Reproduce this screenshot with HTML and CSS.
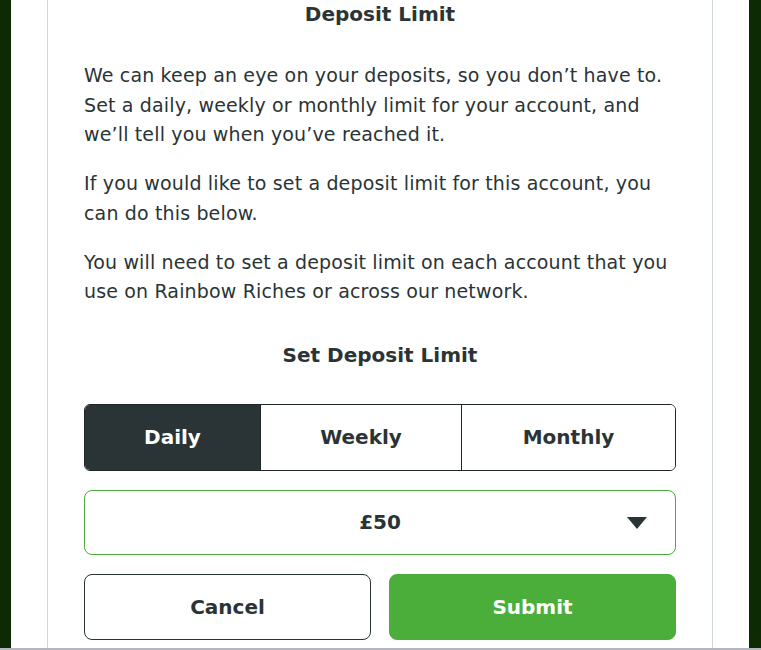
FILE: index.html
```html
<!DOCTYPE html>
<html lang="en">
<head>
<meta charset="utf-8">
<title>Deposit Limit</title>
<link rel="stylesheet" href="styles.css">
</head>
<body>
<div class="page">
  <div class="card">
    <h1 class="title">Deposit Limit</h1>
    <p class="text">We can keep an eye on your deposits, so you don’t have to. Set a daily, weekly or monthly limit for your account, and we’ll tell you when you’ve reached it.</p>
    <p class="text">If you would like to set a deposit limit for this account, you can do this below.</p>
    <p class="text">You will need to set a deposit limit on each account that you use on Rainbow Riches or across our network.</p>
    <h2 class="subtitle">Set Deposit Limit</h2>
    <div class="tabs">
      <button class="tab tab-active">Daily</button>
      <button class="tab">Weekly</button>
      <button class="tab">Monthly</button>
    </div>
    <div class="select">
      <span class="select-value">£50</span>
      <svg class="select-arrow" width="20" height="12" viewBox="0 0 20 12"><path d="M0 0 H20 L10 12 Z" fill="#2a3436"/></svg>
    </div>
    <div class="actions">
      <button class="btn btn-cancel">Cancel</button>
      <button class="btn btn-submit">Submit</button>
    </div>
  </div>
</div>
<div class="scrollbar"></div>
</body>
</html>
```
FILE: styles.css
```css
html, body {
  margin: 0;
  padding: 0;
}
body {
  background: #0c2a03;
  width: 761px;
  height: 650px;
  overflow: hidden;
  font-family: "DejaVu Sans", "Open Sans", sans-serif;
  color: #2a3436;
}
.page {
  margin-left: 11px;
  width: 738px;
  height: 648px;
  background: #ffffff;
  overflow: hidden;
}
.card {
  margin-left: 36px;
  width: 592px;
  height: 648px;
  padding: 0 36px;
  border-left: 1px solid #cfd6da;
  border-right: 1px solid #cfd6da;
}
.title {
  margin: 0;
  font-size: 20px;
  font-weight: 700;
  line-height: 28px;
  text-align: center;
}
.text {
  margin: 33px 0 0;
  font-size: 19px;
  letter-spacing: 0.15px;
  line-height: 29.5px;
}
.text + .text {
  margin-top: 19.5px;
}
.subtitle {
  margin: 34px 0 0;
  font-size: 20px;
  font-weight: 700;
  line-height: 28px;
  text-align: center;
}
.tabs {
  margin-top: 35px;
  display: grid;
  grid-template-columns: 175px 201px 1fr;
  height: 65px;
  border: 1px solid #1f2628;
  border-radius: 6px;
  overflow: hidden;
}
.tab {
  border: 0;
  background: #fff;
  font-family: inherit;
  font-size: 20px;
  font-weight: 700;
  color: #2a3436;
  padding: 0;
}
.tab + .tab {
  border-left: 1px solid #1f2628;
}
.tab-active {
  background: #2a3436;
  color: #ffffff;
}
.select {
  margin-top: 19px;
  height: 63px;
  border: 1px solid #4cae3a;
  border-radius: 8px;
  display: flex;
  align-items: center;
  justify-content: center;
  position: relative;
}
.select-value {
  font-size: 20px;
  font-weight: 700;
}
.select-arrow {
  position: absolute;
  right: 28px;
  top: 26px;
}
.actions {
  margin-top: 19px;
  display: flex;
  gap: 18px;
}
.btn {
  flex: 1;
  height: 66px;
  border-radius: 8px;
  font-family: inherit;
  font-size: 20px;
  font-weight: 700;
  padding: 0;
}
.btn-cancel {
  background: #fff;
  border: 1px solid #2a3436;
  color: #2a3436;
}
.btn-submit {
  background: #4cae3a;
  border: 1px solid #4cae3a;
  color: #fff;
}
.scrollbar {
  position: fixed;
  left: 0;
  bottom: 0;
  width: 761px;
  height: 2px;
  background: #b3b6be;
}
```
